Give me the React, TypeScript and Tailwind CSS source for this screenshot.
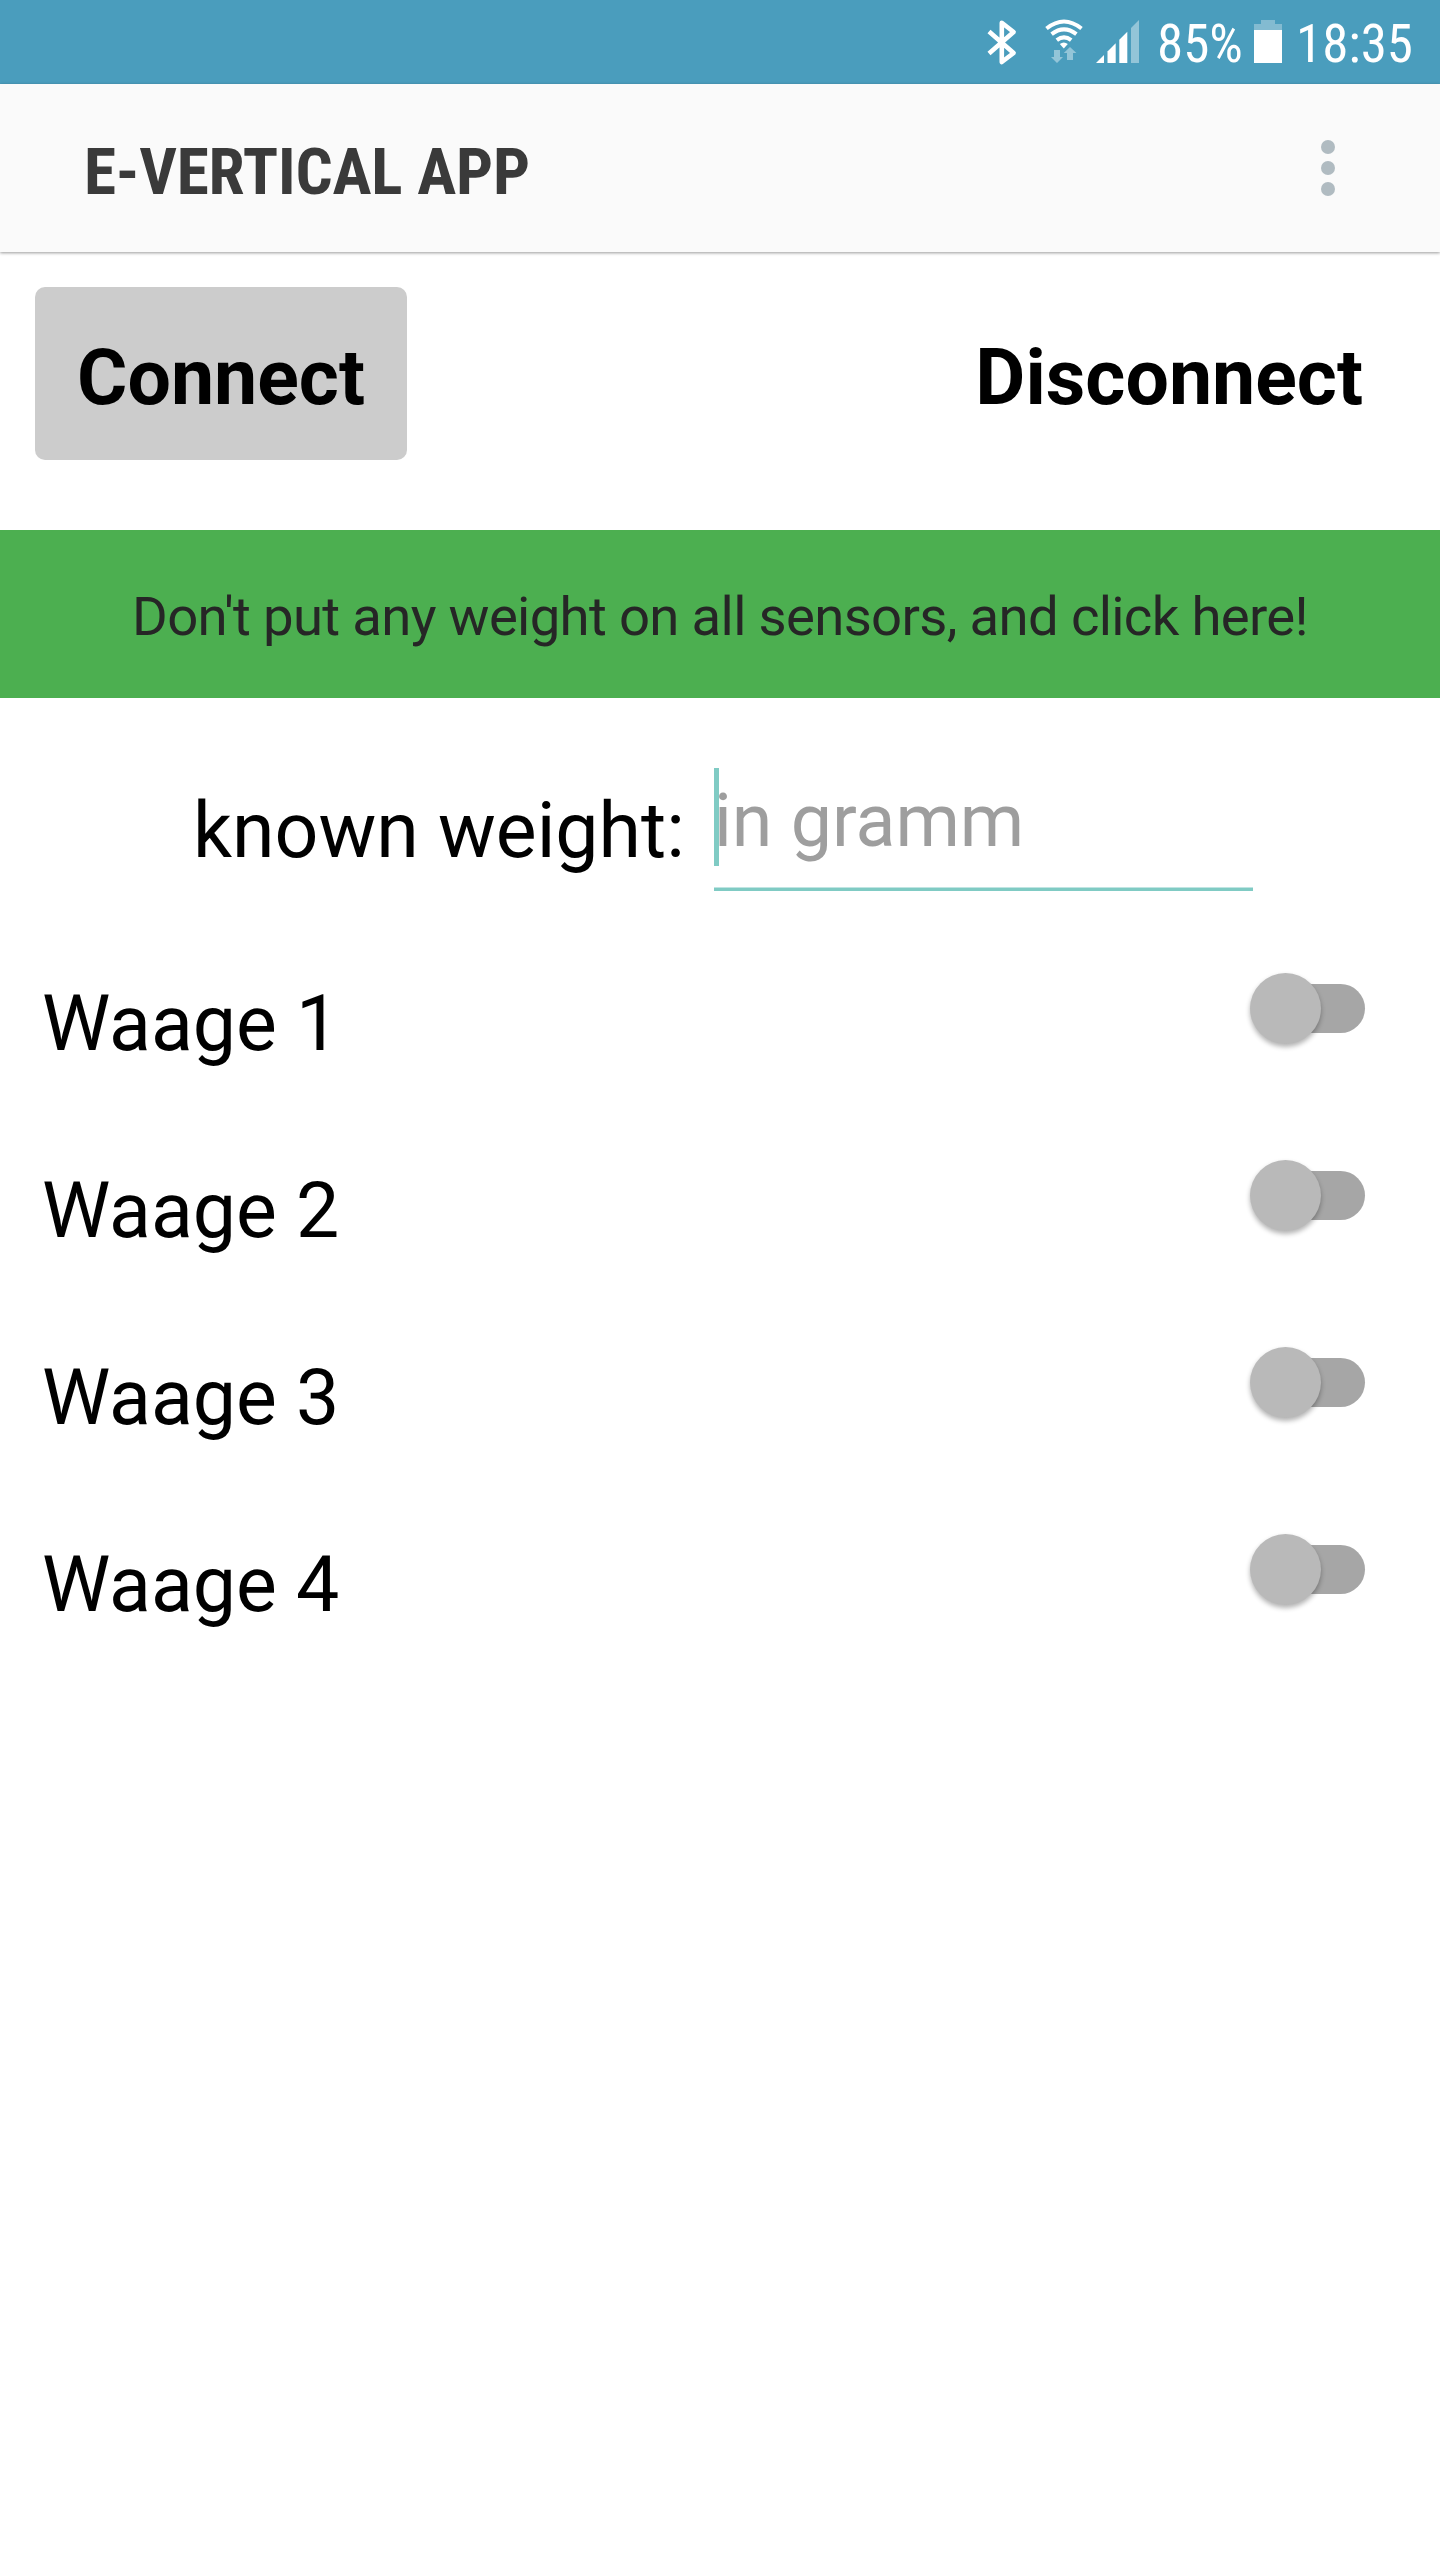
import { useState } from "react";

const SCALES = ["Waage 1", "Waage 2", "Waage 3", "Waage 4"];

function BluetoothIcon() {
  return (
    <svg className="h-[84px] w-[30px] shrink-0" viewBox="0 0 30 84" fill="none">
      <path
        d="M2 31.5 L26.6 53 L14.8 62 V22.8 L26.6 32 L2 53.5"
        stroke="#fff"
        strokeWidth="4.6"
        strokeLinejoin="round"
      />
    </svg>
  );
}

function WifiIcon() {
  return (
    <svg className="h-[84px] w-[38px] shrink-0" viewBox="0 0 38 84" fill="none">
      <g stroke="#fff" strokeWidth="4">
        <path d="M1.5 28.5 Q19 14.5 36.5 28.5" />
        <path d="M6.6 34.2 Q19 24.6 31.4 34.2" />
        <path d="M11.8 40.2 Q19 34.6 26.2 40.2" />
      </g>
      <path d="M14.8 44 Q18.8 41 22.8 44 L18.8 48.6 Z" fill="#fff" />
      <g fill="#93c5d8">
        <path d="M9 50 h6 v7 h3 L12 63 L6 57 h3 Z" />
        <path d="M22 60 h6 v-7 h3.4 L25 47 L18.8 53 H22 Z" />
      </g>
    </svg>
  );
}

function SignalIcon() {
  return (
    <svg className="h-[84px] w-[44px] shrink-0" viewBox="0 0 44 84">
      <g fill="#fff">
        <path d="M0 63 L8 55 V63 Z" />
        <path d="M11.5 63 V51.5 L19.7 43.3 V63 Z" />
        <path d="M23.3 63 V39.7 L31.3 31.7 V63 Z" />
      </g>
      <path d="M35 63 V28 L43 20 V63 Z" fill="#93c5d8" />
    </svg>
  );
}

function BatteryIcon() {
  return (
    <svg className="h-[84px] w-[28px] shrink-0" viewBox="0 0 28 84">
      <path d="M0 30 V24 H7 V20 H21 V24 H28 V30 Z" fill="#83bbd1" />
      <path d="M0 30 H28 V63 H0 Z" fill="#fff" />
    </svg>
  );
}

function StatusBar() {
  return (
    <div className="flex h-[84px] items-start bg-[#4a9dbd] pl-[987px] text-[53px] leading-[62px] text-white">
      <BluetoothIcon />
      <div className="w-[28px] shrink-0" />
      <WifiIcon />
      <div className="w-[13px] shrink-0" />
      <SignalIcon />
      <span className="mt-[13px] ml-[17px] w-[97px] shrink-0 font-stretch-75%">85%</span>
      <BatteryIcon />
      <span className="mt-[13px] ml-[14px] font-stretch-75%">18:35</span>
    </div>
  );
}

function AppBar() {
  return (
    <header className="relative flex h-[168px] items-center justify-between bg-[#fafafa] pr-[105px] pl-[84px] shadow-[0_1px_3px_rgba(0,0,0,0.4)]">
      <h1 className="mt-[8px] text-[65.3px] leading-[78px] font-bold tracking-[-0.2px] text-[#3a3a3a] font-stretch-75%">
        E-VERTICAL APP
      </h1>
      <button className="flex flex-col gap-[7px]" aria-label="More options">
        <span className="size-[14px] rounded-full bg-[#b0bbc1]" />
        <span className="size-[14px] rounded-full bg-[#b0bbc1]" />
        <span className="size-[14px] rounded-full bg-[#b0bbc1]" />
      </button>
    </header>
  );
}

interface ScaleRowProps {
  name: string;
  checked: boolean;
  onToggle: () => void;
}

function ScaleRow({ name, checked, onToggle }: ScaleRowProps) {
  return (
    <div className="flex h-[187px] items-start justify-between pr-[75px] pl-[42px]">
      <span className="mt-[13px] text-[77px] leading-[90px]">{name}</span>
      <button
        role="switch"
        aria-checked={checked}
        aria-label={name}
        onClick={onToggle}
        className="mt-[7px] flex h-[71px] w-[115px] items-center"
      >
        <span className="z-10 size-[71px] shrink-0 rounded-full bg-[#b9b9b9] shadow-[0_3px_5px_rgba(0,0,0,0.3)]" />
        <span className="-ml-[36px] h-[49px] w-[80px] shrink-0 rounded-r-full bg-[#a6a6a6]" />
      </button>
    </div>
  );
}

export default function App() {
  const [active, setActive] = useState<string[]>([]);

  const toggle = (name: string) =>
    setActive((prev) =>
      prev.includes(name) ? prev.filter((n) => n !== name) : [...prev, name]
    );

  return (
    <div className="h-[2560px] w-[1440px] overflow-hidden bg-white font-['Roboto',sans-serif] text-black">
      <StatusBar />
      <AppBar />

      <div className="flex h-[278px] items-start justify-between px-[35px] pt-[35px]">
        <button className="h-[173px] w-[372px] rounded-[10px] bg-[#ccc] pt-[9px] text-[77px] leading-[90px] font-bold">
          Connect
        </button>
        <button className="h-[173px] pt-[9px] pr-[42px] text-[77px] leading-[90px] font-bold">
          Disconnect
        </button>
      </div>

      <button className="block h-[168px] w-full bg-[#4caf50] pt-[4px] text-center text-[54.5px] leading-[66px] tracking-[-0.68px] text-[#262626]">
        Don't put any weight on all sensors, and click here!
      </button>

      <div className="flex h-[268px] items-start pl-[193px]">
        <span className="mt-[88px] w-[521px] text-[77px] leading-[90px]">known weight:</span>
        <div className="mt-[70px] h-[123px] w-[539px] border-b-[3px] border-[#80cbc4] shadow-[inset_0_-1px_0_#c0e5e2]">
          <div className="flex h-[98px] items-start">
            <span className="h-[98px] w-[5px] bg-[#80cbc4]" />
            <span className="mt-[8px] -ml-[5px] text-[73.5px] leading-[90px] text-[#9e9e9e]">
              in gramm
            </span>
          </div>
        </div>
      </div>

      {SCALES.map((name) => (
        <ScaleRow
          key={name}
          name={name}
          checked={active.includes(name)}
          onToggle={() => toggle(name)}
        />
      ))}
    </div>
  );
}
